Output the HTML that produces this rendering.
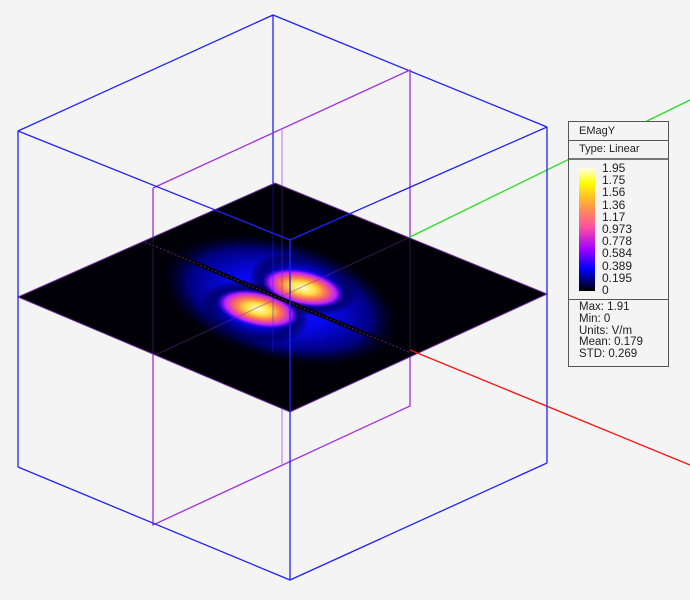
<!DOCTYPE html>
<html><head><style>
body{margin:0;background:#f4f4f4;width:690px;height:600px;overflow:hidden;position:relative;font-family:"Liberation Sans",sans-serif;}
svg{position:absolute;left:0;top:0}
#leg{position:absolute;left:568px;top:121px;width:99px;height:244px;border:1px solid #555;background:#f4f4f4;font-size:11px;color:#222;}
.row{border-bottom:1px solid #555;padding-left:10px;}
</style></head><body>
<svg width="690" height="600">
<defs>
<clipPath id="pl"><polygon points="275,183 18,297 290,412 547,294"/></clipPath>
<radialGradient id="blue" cx="0.5" cy="0.5" r="0.5">
<stop offset="0" stop-color="#1818ff"/><stop offset="0.4" stop-color="#0808f0"/><stop offset="0.75" stop-color="#000080"/><stop offset="1" stop-color="#000010" stop-opacity="0"/></radialGradient>
<radialGradient id="hot" cx="0.5" cy="0.5" r="0.5">
<stop offset="0" stop-color="#ffffd0"/><stop offset="0.3" stop-color="#ffe040"/><stop offset="0.55" stop-color="#ff7050"/><stop offset="0.8" stop-color="#c020ff"/><stop offset="1" stop-color="#4000ff" stop-opacity="0"/></radialGradient>
</defs>
<g stroke="#2020ff" stroke-width="1.3" fill="none">
<polyline points="18,131 273,15 547,127"/>
<line x1="273" y1="15" x2="273" y2="190"/>
</g>
<g stroke="#a030e0" stroke-width="1.3" fill="none">
<polyline points="153,188 410,70 410,406 153,525 153,188"/>
<line x1="282" y1="129" x2="282" y2="465" stroke="#c890e8"/>
</g>
<polygon points="275,183 18,297 290,412 547,294" fill="#000006"/>
<g clip-path="url(#pl)">
<ellipse cx="280" cy="300" rx="125" ry="62" transform="rotate(15 280 300)" fill="url(#blue)"/>
<ellipse cx="303" cy="285" rx="55" ry="30" transform="rotate(12 303 285)" fill="url(#blue)"/>
<ellipse cx="255" cy="312" rx="55" ry="30" transform="rotate(12 255 312)" fill="url(#blue)"/>
<ellipse cx="303" cy="288" rx="42" ry="18" transform="rotate(12 303 288)" fill="url(#hot)"/>
<ellipse cx="258" cy="309" rx="42" ry="18" transform="rotate(12 258 309)" fill="url(#hot)"/>
<g stroke="#7030a0" stroke-width="1" opacity="0.45">
<line x1="153" y1="356" x2="410" y2="237"/>
<line x1="153" y1="238" x2="153" y2="356"/>
<line x1="410" y1="237" x2="410" y2="352"/>
<line x1="282" y1="183" x2="282" y2="300"/>
<line x1="273" y1="183" x2="273" y2="352" stroke="#2020ff"/>
</g>
<line x1="145" y1="242" x2="411" y2="353" stroke="#000008" stroke-width="4"/>
<line x1="145" y1="242" x2="411" y2="353" stroke="#5a2080" stroke-width="1" stroke-dasharray="2,2"/>
</g>
<polygon points="275,183 18,297 290,412 547,294" fill="none" stroke="#7030a0" stroke-width="1"/>
<line x1="410" y1="237" x2="690" y2="100" stroke="#20e020" stroke-width="1.3"/>
<line x1="410" y1="350" x2="690" y2="465" stroke="#ff1010" stroke-width="1.3"/>
<g stroke="#2020ff" stroke-width="1.3" fill="none">
<line x1="18" y1="131" x2="18" y2="467"/>
<line x1="547" y1="127" x2="547" y2="463"/>
<polyline points="18,131 290,240 547,127"/>
<line x1="290" y1="240" x2="290" y2="580"/>
<polyline points="18,467 290,580 547,463"/>
</g>
</svg>
<div id="leg">
<div class="row" style="height:18px;line-height:18px;">EMagY</div>
<div class="row" style="height:17px;line-height:17px;border-bottom:2px solid #777">Type: Linear</div>
<div class="row" style="height:139px;position:relative;padding:0">
<div style="position:absolute;left:10px;top:8px;width:16px;height:123px;background:linear-gradient(#ffffe8,#ffff00 12%,#ffa040 30%,#ff50a0 48%,#a000ff 66%,#0000ff 82%,#000000)"></div>
<div style="position:absolute;left:33px;top:2px;line-height:12.2px;font-size:12px">1.95<br>1.75<br>1.56<br>1.36<br>1.17<br>0.973<br>0.778<br>0.584<br>0.389<br>0.195<br>0</div>
</div>
<div style="padding-left:10px;padding-top:2px;line-height:11.8px;font-size:11.5px">Max: 1.91<br>Min: 0<br>Units: V/m<br>Mean: 0.179<br>STD: 0.269</div>
</div>
</body></html>
